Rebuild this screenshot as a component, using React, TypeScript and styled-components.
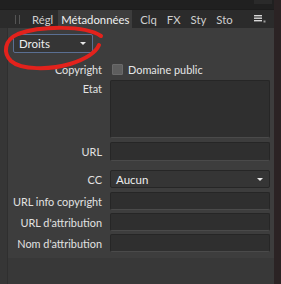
import React from 'react';
import styled, { createGlobalStyle } from 'styled-components';

const GlobalStyle = createGlobalStyle`
    html, body {
        margin: 0;
        padding: 0;
        background: #2b2324;
        font-family: 'Lato', 'Noto Sans', sans-serif;
        font-size: 10.9px;
        color: #e4e4e4;
    }
`;

const Shell = styled.div`
    display: flex;
    width: 281px;
    height: 284px;
    overflow: hidden;
    position: relative;
`;

const Main = styled.div`
    width: 274px;
    flex-shrink: 0;
    display: flex;
    flex-direction: column;
`;

const RightEdge = styled.div`
    flex: 1;
    background: #2b2324;
`;

const TopStrip = styled.div`
    height: 10px;
    background: #202020;
    display: flex;
    justify-content: flex-end;
`;

const TopTab = styled.div`
    width: 18px;
    height: 4px;
    margin-right: 2px;
    background: #2a2a2a;
`;

const TabBar = styled.div`
    height: 19px;
    background: #2b2b2b;
    border-top: 1px solid #1c1c1c;
    display: flex;
    align-items: stretch;
    padding-left: 15px;
`;

const Grip = styled.div`
    width: 5px;
    margin: 5px 7px 0 0;
    height: 9px;
    border-left: 1px solid #555;
    border-right: 1px solid #555;
    box-sizing: border-box;
`;

const Tab = styled.div<{ $active?: boolean }>`
    padding: 0 ${({ $active }) => ($active ? '3px' : '5px')};
    margin-right: ${({ $active }) => ($active ? '3px' : '0')};
    display: flex;
    align-items: center;
    white-space: nowrap;
    font-size: 11.3px;
    color: ${({ $active }) => ($active ? '#f0f0f0' : '#cfcfcf')};
    background: ${({ $active }) => ($active ? '#3d3d3d' : 'transparent')};
`;

const MenuButton = styled.div`
    margin-left: auto;
    margin-right: 8px;
    display: flex;
    align-items: flex-end;
    padding-bottom: 5px;
`;

const Panel = styled.div`
    flex: 1;
    display: flex;
    background: #3d3d3d;
`;

const Gutter = styled.div`
    width: 7px;
    flex-shrink: 0;
    background: #363636;
    border-right: 1px solid #2f2f2f;
`;

const Content = styled.div`
    flex: 1;
    min-width: 0;
    display: flex;
    flex-direction: column;
`;

const Body = styled.div`
    padding: 6px 4px 6px 5px;
    display: flex;
    flex-direction: column;
`;

const Footer = styled.div`
    height: 26px;
    background: #383838;
`;

const Select = styled.div<{ $focus?: boolean; $wide?: boolean }>`
    box-sizing: border-box;
    width: ${({ $wide }) => ($wide ? '160px' : '80px')};
    height: ${({ $wide }) => ($wide ? '18px' : '19px')};
    border: 1px solid ${({ $focus }) => ($focus ? '#5a6f93' : '#262626')};
    border-radius: 2px;
    background: #353535;
    display: flex;
    align-items: center;
    justify-content: space-between;
    padding: 0 6px 0 5px;
    font-size: 11.5px;
    color: #eeeeee;
`;

const Caret = styled.span`
    width: 0;
    height: 0;
    border-left: 3px solid transparent;
    border-right: 3px solid transparent;
    border-top: 3px solid #e8e8e8;
`;

const Form = styled.div`
    display: grid;
    grid-template-columns: 89px 160px;
    column-gap: 8px;
    margin-top: 10px;
`;

const Label = styled.div<{ $top?: boolean; $gap?: number }>`
    white-space: nowrap;
    display: flex;
    justify-content: flex-end;
    align-items: ${({ $top }) => ($top ? 'flex-start' : 'center')};
    padding-top: ${({ $top }) => ($top ? '2px' : '0')};
    margin-top: ${({ $gap }) => $gap ?? 3}px;
    color: #e2e2e2;
`;

const Cell = styled.div<{ $gap?: number }>`
    margin-top: ${({ $gap }) => $gap ?? 3}px;
    display: flex;
    align-items: center;
`;

const Field = styled.div<{ $h?: number }>`
    box-sizing: border-box;
    width: 160px;
    height: ${({ $h }) => $h ?? 19}px;
    background: #2f2f2f;
    border: 1px solid #262626;
    border-bottom-color: #4a4a4a;
    border-radius: 2px;
`;

const Check = styled.span`
    box-sizing: border-box;
    width: 11px;
    height: 11px;
    background: #5e5e5e;
    border: 1px solid #6a6a6a;
    border-radius: 1px;
    margin: 0 5px 0 2px;
`;

const CheckRow = styled.div`
    height: 12px;
    display: flex;
    align-items: center;
    color: #e6e6e6;
`;

const Annotation = styled.svg`
    position: absolute;
    left: 0;
    top: 0;
    pointer-events: none;
`;

function MenuIcon() {
    return (
        <svg width="12" height="8" viewBox="0 0 12 8">
            <rect x="0" y="0" width="8" height="1.4" fill="#d8d8d8" />
            <rect x="0" y="2.5" width="8" height="1.4" fill="#d8d8d8" />
            <rect x="0" y="5" width="8" height="1.4" fill="#d8d8d8" />
            <rect x="9.5" y="5.5" width="2" height="2" fill="#9a9a9a" />
        </svg>
    );
}

export default function App() {
    return (
        <>
            <GlobalStyle />
            <Shell>
                <Main>
                    <TopStrip>
                        <TopTab />
                    </TopStrip>
                    <TabBar>
                        <Grip />
                        <Tab>Régl</Tab>
                        <Tab $active>Métadonnées</Tab>
                        <Tab>Clq</Tab>
                        <Tab>FX</Tab>
                        <Tab>Sty</Tab>
                        <Tab>Sto</Tab>
                        <MenuButton>
                            <MenuIcon />
                        </MenuButton>
                    </TabBar>
                    <Panel>
                        <Gutter />
                        <Content>
                            <Body>
                                <Select $focus>
                                    Droits
                                    <Caret />
                                </Select>
                                <Form>
                                    <Label $gap={0}>Copyright</Label>
                                    <Cell $gap={0}>
                                        <CheckRow>
                                            <Check />
                                            Domaine public
                                        </CheckRow>
                                    </Cell>
                                    <Label $top $gap={4}>Etat</Label>
                                    <Cell $gap={4}>
                                        <Field $h={58} />
                                    </Cell>
                                    <Label $gap={4}>URL</Label>
                                    <Cell $gap={4}>
                                        <Field />
                                    </Cell>
                                    <Label $gap={9}>CC</Label>
                                    <Cell $gap={9}>
                                        <Select $wide>
                                            Aucun
                                            <Caret />
                                        </Select>
                                    </Cell>
                                    <Label $gap={4}>URL info copyright</Label>
                                    <Cell $gap={4}>
                                        <Field $h={18} />
                                    </Cell>
                                    <Label>URL d'attribution</Label>
                                    <Cell>
                                        <Field $h={18} />
                                    </Cell>
                                    <Label>Nom d'attribution</Label>
                                    <Cell>
                                        <Field $h={18} />
                                    </Cell>
                                </Form>
                            </Body>
                            <Footer />
                        </Content>
                    </Panel>
                </Main>
                <RightEdge />
                <Annotation width="281" height="284" viewBox="0 0 281 284">
                    <path
                        d="M 101 36 C 85 25, 40 26, 18 34 C 4 40, 3 53, 11 61 C 21 70, 50 70, 70 64 C 86 59, 96 52, 99 45"
                        fill="none"
                        stroke="#e3221c"
                        strokeWidth="4"
                        strokeLinecap="round"
                    />
                </Annotation>
            </Shell>
        </>
    );
}
